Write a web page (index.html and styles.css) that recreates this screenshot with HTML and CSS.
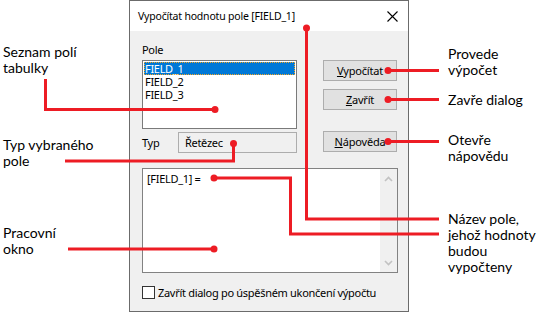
FILE: index.html
```html
<!DOCTYPE html>
<html lang="cs">
<head>
<meta charset="UTF-8">
<title>Vypočítat hodnotu pole</title>
<link rel="stylesheet" href="styles.css">
</head>
<body>

<div class="page">

    <!-- popisky vlevo -->
    <div class="notes notes--left">
        <div class="note note--list">Seznam polí<br>tabulky</div>
        <div class="note note--type">Typ vybraného<br>pole</div>
        <div class="note note--work">Pracovní<br>okno</div>
    </div>

    <div class="dialog">
        <div class="dialog__title">
            <span>Vypočítat hodnotu pole [FIELD_1]</span>
            <svg class="dialog__close" width="11" height="11" viewBox="0 0 11 11">
                <path d="M0.5 0.5 L10.5 10.5 M10.5 0.5 L0.5 10.5" stroke="#000" stroke-width="1.1"/>
            </svg>
        </div>

        <div class="dialog__body">
            <div class="top-row">
                <div class="fields">
                    <div class="label">Pole</div>
                    <div class="listbox">
                        <div class="listbox__item selected">FIELD_1</div>
                        <div class="listbox__item">FIELD_2</div>
                        <div class="listbox__item">FIELD_3</div>
                    </div>
                    <div class="type-row">
                        <span class="type-row__label">Typ</span>
                        <div class="type-row__value">Řetězec</div>
                    </div>
                </div>
                <div class="buttons">
                    <button class="btn"><u>V</u>ypočítat</button>
                    <button class="btn"><u>Z</u>avřít</button>
                    <button class="btn btn--help"><u>N</u>ápověda</button>
                </div>
            </div>

            <div class="workarea">
                <div class="workarea__text">[FIELD_1] =</div>
                <div class="scrollbar">
                    <svg width="9" height="6" viewBox="0 0 9 6"><path d="M1 5 L4.5 1.5 L8 5" fill="none" stroke="#c2c2c2" stroke-width="1.6"/></svg>
                    <svg width="9" height="6" viewBox="0 0 9 6"><path d="M1 1 L4.5 4.5 L8 1" fill="none" stroke="#c2c2c2" stroke-width="1.6"/></svg>
                </div>
            </div>

            <label class="check-row">
                <span class="check-row__box"></span>
                Zavřít dialog po úspěšném ukončení výpočtu
            </label>
        </div>
    </div>

    <!-- popisky vpravo -->
    <div class="notes notes--right">
        <div class="note note--calc">Provede<br>výpočet</div>
        <div class="note note--close">Zavře dialog</div>
        <div class="note note--help">Otevře<br>nápovědu</div>
        <div class="note note--name">Název pole,<br>jehož hodnoty<br>budou<br>vypočteny</div>
    </div>

    <!-- odkazové čáry leží přes dialog -->
    <svg class="leaders" width="548" height="313" viewBox="0 0 548 313">
        <g fill="none" stroke="#ed1c24" stroke-width="3">
            <polyline points="45.5,79 45.5,109.5 215,109.5"/>
            <polyline points="65,161 233.5,161 233.5,143.5"/>
            <polyline points="68,249 214,249"/>
            <polyline points="388,70.5 439,70.5"/>
            <polyline points="388,99.5 439,99.5"/>
            <polyline points="388,141.5 439,141.5"/>
            <polyline points="306.5,28 306.5,219 439,219"/>
            <polyline points="214,178 290.5,178 290.5,234 439,234"/>
        </g>
        <g fill="#ed1c24">
            <circle cx="215" cy="109.5" r="3.5"/>
            <circle cx="233.5" cy="143.5" r="3.5"/>
            <circle cx="214" cy="249" r="3.5"/>
            <circle cx="388" cy="70.5" r="3.5"/>
            <circle cx="388" cy="99.5" r="3.5"/>
            <circle cx="388" cy="141.5" r="3.5"/>
            <circle cx="306.5" cy="28" r="3.5"/>
            <circle cx="214" cy="178" r="3.5"/>
        </g>
    </svg>

</div>

</body>
</html>
```

FILE: styles.css
```css
:root
{
    --dialog-bg: #f0f0f0;
    --dialog-border: #6b6b6b;
    --control-border: #7a7a7a;
    --button-bg: #e1e1e1;
    --button-border: #adadad;
    --select-colour: #0078d7;
    --text-colour: #000;
}

body
{
    margin: 0;
    background: #fff;
    color: var(--text-colour);
    font-family: "Noto Sans", "Open Sans", sans-serif;
}

.page
{
    position: relative;
    display: flex;
    width: 548px;
    height: 313px;
}

/* ---- popisky ---- */

.notes
{
    display: flex;
    flex-direction: column;
    font-family: Lato, "Open Sans", sans-serif;
    font-size: 14px;
    line-height: 16px;
}

.notes--left
{
    width: 129px;
    padding-left: 3px;
    box-sizing: border-box;
}

.notes--right
{
    flex: 1;
    padding-left: 39px;
}

.note--list { margin-top: 44px; }
.note--type { margin-top: 61px; }
.note--work { margin-top: 56px; }

.note--calc { margin-top: 46px; }
.note--close { margin-top: 14px; }
.note--help { margin-top: 24px; }
.note--name { margin-top: 47px; }

/* ---- dialog ---- */

.dialog
{
    width: 280px;
    height: 312px;
    box-sizing: border-box;
    border: 1px solid var(--dialog-border);
    background: var(--dialog-bg);
    font-size: 11px;
    letter-spacing: -0.3px;
    display: flex;
    flex-direction: column;
}

.dialog__title
{
    height: 30px;
    background: #fff;
    display: flex;
    align-items: center;
    justify-content: space-between;
    padding: 0 10px 0 8px;
    font-size: 10.5px;
    letter-spacing: -0.2px;
}

.dialog__close
{
    display: block;
}

.dialog__body
{
    padding: 11px 0 0 12px;
}

.top-row
{
    display: flex;
}

.fields
{
    width: 155px;
}

.label
{
    height: 15px;
    line-height: 15px;
    margin-bottom: 3px;
}

.listbox
{
    height: 69px;
    box-sizing: border-box;
    border: 1px solid var(--control-border);
    background: #fff;
    padding: 1px;
}

.listbox__item
{
    height: 13px;
    line-height: 13px;
    padding-left: 1px;
}

.listbox__item.selected
{
    background: var(--select-colour);
    color: #fff;
    outline: 1px dotted #f5a623;
    outline-offset: -1px;
}

.type-row
{
    display: flex;
    align-items: center;
    margin-top: 3px;
}

.type-row__label
{
    width: 36px;
}

.type-row__value
{
    width: 119px;
    height: 21px;
    box-sizing: border-box;
    border: 1px solid #adadad;
    background: var(--dialog-bg);
    padding-left: 6px;
    line-height: 19px;
}

.buttons
{
    display: flex;
    flex-direction: column;
    margin-left: 26px;
    padding-top: 18px;
}

.btn
{
    width: 74px;
    height: 21px;
    margin: 0 0 8px 0;
    padding: 0;
    border: 1px solid var(--button-border);
    background: var(--button-bg);
    font-family: inherit;
    font-size: 11px;
    letter-spacing: -0.2px;
    color: var(--text-colour);
}

.btn--help
{
    margin: 13px 0 0 0;
}

.workarea
{
    display: flex;
    width: 256px;
    height: 105px;
    box-sizing: border-box;
    margin-top: 15px;
    border: 1px solid #828282;
    background: #fff;
}

.workarea__text
{
    flex: 1;
    padding: 2px 0 0 4px;
}

.scrollbar
{
    width: 17px;
    background: var(--dialog-bg);
    display: flex;
    flex-direction: column;
    justify-content: space-between;
    align-items: center;
    padding: 7px 0 6px;
}

.scrollbar svg
{
    display: block;
}

.check-row
{
    display: flex;
    align-items: center;
    margin-top: 13px;
    height: 13px;
    white-space: nowrap;
}

.check-row__box
{
    width: 13px;
    height: 13px;
    box-sizing: border-box;
    border: 1px solid #333;
    background: #fff;
    margin-right: 3px;
}

/* ---- odkazové čáry ---- */

.leaders
{
    position: absolute;
    left: 0;
    top: 0;
    pointer-events: none;
}
```
